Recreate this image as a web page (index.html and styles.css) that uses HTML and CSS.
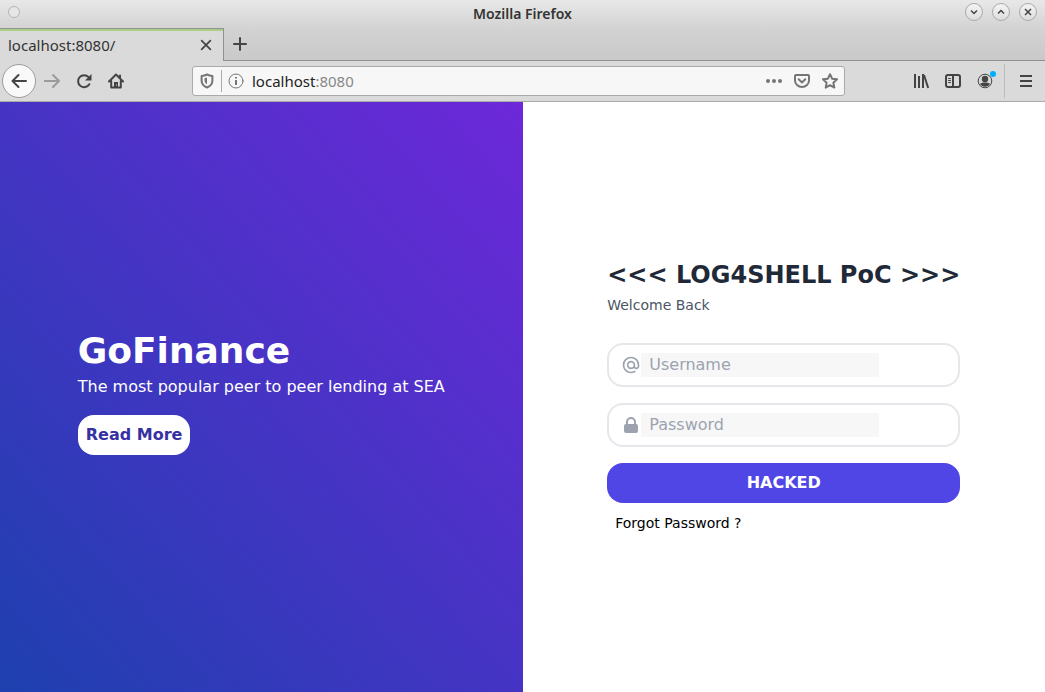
FILE: index.html
```html
<!DOCTYPE html>
<html lang="en">
<head>
<meta charset="utf-8">
<title>Mozilla Firefox</title>
<link rel="stylesheet" href="styles.css">
</head>
<body>
<div class="window">
  <header class="titlebar">
    <button class="dot" aria-label="Window menu"></button>
    <span class="window-title">Mozilla Firefox</span>
    <div class="window-controls">
      <button class="round" aria-label="Minimize"><svg viewBox="0 0 16 16"><path d="M5 6.500l3 3 3-3"/></svg></button>
      <button class="round" aria-label="Maximize"><svg viewBox="0 0 16 16"><path d="M5 9.500l3-3 3 3"/></svg></button>
      <button class="round" aria-label="Close"><svg viewBox="0 0 16 16"><path d="M5 5l6 6M11 5l-6 6"/></svg></button>
    </div>
  </header>
  <div class="tabstrip">
    <div class="tab">
      <span class="tab-label">localhost:8080/</span>
      <button class="icon-btn" aria-label="Close tab"><svg class="icon line" viewBox="0 0 16 16"><path d="M3 3l10 10M13 3L3 13"/></svg></button>
    </div>
    <div class="tab-rest">
      <button class="icon-btn" aria-label="New tab"><svg class="icon line" viewBox="0 0 16 16"><path d="M8 2v12M2 8h12"/></svg></button>
    </div>
  </div>
  <nav class="toolbar">
    <button class="back" aria-label="Back"><svg class="icon line" viewBox="0 0 16 16"><path d="M15 8H1.500M7.500 2l-6 6 6 6"/></svg></button>
    <div class="nav-buttons">
      <button class="icon-btn" aria-label="Forward" disabled><svg class="icon line faded" viewBox="0 0 16 16"><path d="M0.500 8H15M9 2l6 6-6 6"/></svg></button>
      <button class="icon-btn" aria-label="Reload"><svg class="icon line" viewBox="0 0 16 16"><path d="M13.300 11.200A6 6 0 1 1 12.600 4.200"/><path class="solid" d="M15.500 1v6.500H9z"/></svg></button>
      <button class="icon-btn" aria-label="Home"><svg class="icon line" viewBox="0 0 16 16"><path d="M1 8.500L8 1.500l7 7M3.200 8v6.500h9.600V8M12 2.500v3"/><path class="solid" d="M6 9h4v6H6z"/><path class="hole" d="M8 11.500h1v1H8z"/></svg></button>
    </div>
    <div class="urlbar">
      <svg class="icon line muted" viewBox="0 0 16 16"><path d="M8 1.500C6 2.500 4.500 2.800 2.600 3v4.500c0 3.500 2.200 5.800 5.400 7 3.200-1.200 5.400-3.500 5.400-7V3C11.500 2.800 10 2.500 8 1.500z"/><path class="solid" d="M8 4.500v7C6.300 10.300 5.500 9 5.500 7V5.200z"/></svg>
      <span class="url-sep"></span>
      <svg class="icon line info" viewBox="0 0 16 16"><circle cx="8" cy="8" r="7"/><path class="bold" d="M8 7v5M8 4v1.600"/></svg>
      <div class="url" role="textbox" aria-label="Address">localhost<span class="port">:8080</span></div>
      <div class="page-actions">
        <button class="icon-btn" aria-label="Page actions"><svg class="icon muted-fill" viewBox="0 0 16 16"><circle cx="2" cy="8" r="2"/><circle cx="8" cy="8" r="2"/><circle cx="14" cy="8" r="2"/></svg></button>
        <button class="icon-btn" aria-label="Save to Pocket"><svg class="icon line muted" viewBox="0 0 16 16"><path d="M2 2h12a1 1 0 0 1 1 1v4.500a7 6.500 0 0 1-14 0V3a1 1 0 0 1 1-1zM4.700 6.300L8 9.500l3.300-3.200"/></svg></button>
        <button class="icon-btn" aria-label="Bookmark"><svg class="icon line muted" viewBox="0 0 16 16"><path d="M8 1.200l2.100 4.500 4.900.6-3.600 3.400.9 4.900L8 12.200l-4.300 2.400.9-4.900L1 6.300l4.900-.6z"/></svg></button>
      </div>
    </div>
    <div class="tools">
      <button class="icon-btn" aria-label="Library"><svg class="icon line butt" viewBox="0 0 16 16"><path d="M2 1v14M6 3v12M10 1v14M11 2l4.200 13"/></svg></button>
      <button class="icon-btn" aria-label="Sidebars"><svg class="icon line" viewBox="0 0 16 16"><rect x="1" y="2" width="14" height="12" rx="2"/><path d="M8 2v12"/><path class="thin" d="M3.500 5.500h2M3.500 7.500h2M3.500 9.500h2"/></svg></button>
      <button class="icon-btn account" aria-label="Account"><svg class="icon" viewBox="0 0 16 16"><circle cx="8" cy="8" r="6.800" fill="none" stroke="#444"/><circle cx="8" cy="6" r="3.200"/><path d="M3 11c1-2 9-2 10 0a6 6 0 0 1-10 0z"/></svg><span class="badge"></span></button>
    </div>
    <button class="menu" aria-label="Open menu"><svg class="icon line butt" viewBox="0 0 16 16"><path d="M2 3h12M2 8h12M2 13h12"/></svg></button>
  </nav>
  <main class="page">
    <section class="hero">
      <div class="hero-content">
        <h1 class="brand">GoFinance</h1>
        <p class="tagline">The most popular peer to peer lending at SEA</p>
        <button class="read-more">Read More</button>
      </div>
    </section>
    <section class="login">
      <form class="login-form">
        <h2 class="login-title">&lt;&lt;&lt; LOG4SHELL PoC &gt;&gt;&gt;</h2>
        <p class="welcome">Welcome Back</p>
        <div class="field">
          <svg class="field-icon" viewBox="0 0 24 24"><path class="at" d="M16 12a4 4 0 1 0-8 0 4 4 0 0 0 8 0zm0 0v1.500a2.500 2.500 0 0 0 5 0V12a9 9 0 1 0-9 9m4.500-1.206a8.959 8.959 0 0 1-4.500 1.207"/></svg>
          <input class="field-input" type="text" placeholder="Username" aria-label="Username">
        </div>
        <div class="field">
          <svg class="field-icon" viewBox="0 0 20 20"><path fill-rule="evenodd" d="M5 9V7a5 5 0 0 1 10 0v2a2 2 0 0 1 2 2v5a2 2 0 0 1-2 2H5a2 2 0 0 1-2-2v-5a2 2 0 0 1 2-2zm8-2v2H7V7a3 3 0 0 1 6 0z"/></svg>
          <input class="field-input" type="password" placeholder="Password" aria-label="Password">
        </div>
        <button class="submit" type="button">HACKED</button>
        <a class="forgot" href="#">Forgot Password ?</a>
      </form>
    </section>
  </main>
</div>
</body>
</html>
```

FILE: styles.css
```css
* { box-sizing: border-box; margin: 0; }
body { font-family: "Noto Sans", sans-serif; font-size: 14px; color: #333; }
button { border: 0; padding: 0; background: none; font: inherit; color: inherit; }
svg { display: block; }

.window { display: flex; flex-direction: column; min-height: 100vh; }

.titlebar {
  display: grid;
  grid-template-columns: 1fr auto 1fr;
  align-items: center;
  height: 28px;
  padding: 0 8px;
  background: linear-gradient(#e8e8e8, #d3d3d3);
}
.dot {
  width: 12px;
  height: 12px;
  margin-bottom: 4px;
  border: 1px solid #b4b4b4;
  border-radius: 50%;
  background: #e6e6e6;
}
.window-title { font-weight: 600; line-height: 28px; color: #333; }
.window-controls { display: flex; justify-content: flex-end; gap: 9px; padding-bottom: 4px; }
.round {
  width: 18px;
  height: 18px;
  border: 1px solid #aaa;
  border-radius: 50%;
  background: linear-gradient(#f4f4f4, #dcdcdc);
}
.round svg { width: 16px; height: 16px; fill: none; stroke: #444; stroke-width: 1.5; }

.icon { width: 16px; height: 16px; fill: #444; }
.line { fill: none; stroke: #444; stroke-width: 2; stroke-linecap: round; stroke-linejoin: round; }
.line .solid { fill: #444; stroke: none; }
.line .hole { fill: #dadada; stroke: none; }
.line .thin { stroke-width: 1; }
.butt { stroke-linecap: butt; }
.faded { stroke: #9c9c9c; }
.muted { stroke: #757575; }
.muted .solid { fill: #757575; }
.muted-fill { fill: #757575; }
.info { stroke: #757575; stroke-width: 1; }
.info .bold { stroke-width: 2; stroke-linecap: butt; }

.tabstrip { display: flex; height: 33px; }
.tab {
  display: flex;
  align-items: center;
  justify-content: space-between;
  width: 224px;
  padding: 0 10px 0 8px;
  border-top: 1px solid #929292;
  border-right: 1px solid #929292;
  background: #dadada;
  box-shadow: inset 0 2px #abcf86;
}
.tab-label { font-size: 15px; line-height: 20px; }
.tab .icon { width: 14px; height: 14px; }
.tab-rest {
  display: flex;
  flex: 1;
  align-items: center;
  padding-left: 8px;
  border-bottom: 1px solid #929292;
  background: linear-gradient(#d3d3d3, #c9c9c9);
}

.toolbar {
  display: flex;
  align-items: center;
  height: 41px;
  padding-left: 2px;
  border-bottom: 1px solid #a9a9a9;
  background: #dadada;
}
.back {
  display: grid;
  place-items: center;
  width: 34px;
  height: 34px;
  border: 1px solid #9c9c9c;
  border-radius: 50%;
  background: #f9f9f9;
}
.nav-buttons { display: flex; gap: 16px; padding-left: 8px; }
.urlbar {
  display: flex;
  flex: 1;
  align-items: center;
  height: 30px;
  margin: 0 68px;
  padding: 0 6px;
  border: 1px solid #aaa;
  border-radius: 3px;
  background: #f7f7f7;
}
.url-sep { width: 1px; height: 22px; margin: 0 6px; background: #aaa; }
.url { flex: 1; padding-left: 8px; font-size: 15px; line-height: 20px; color: #222; }
.port { color: #888; }
.page-actions { display: flex; gap: 12px; }
.tools { display: flex; gap: 16px; }
.account { position: relative; }
.badge {
  position: absolute;
  top: -2px;
  right: -3px;
  width: 6px;
  height: 6px;
  border-radius: 50%;
  background: #00aeff;
}
.menu {
  display: grid;
  place-items: center;
  width: 41px;
  height: 34px;
  margin-left: 11px;
  padding-left: 2px;
  border-left: 1px solid #bcbcbc;
}

.page {
  display: grid;
  flex: 1;
  grid-template-columns: 1fr 1fr;
  font-family: "DejaVu Sans", sans-serif;
  font-size: 16px;
  line-height: 24px;
}
.hero {
  display: flex;
  align-items: center;
  justify-content: center;
  background: linear-gradient(to top right, #1e40af, #6d28d9);
}
.hero-content { display: flex; flex-direction: column; align-items: flex-start; }
.brand { font-size: 36px; line-height: 40px; color: #fff; }
.tagline { margin-top: 4px; color: #fff; }
.read-more {
  margin: 16px 0 8px;
  padding: 8px;
  border-radius: 16px;
  background: #fff;
  font-weight: 700;
  color: #3730a3;
}
.login { display: flex; align-items: center; justify-content: center; background: #fff; }
.login-form { display: flex; flex-direction: column; }
.login-title { margin-bottom: 4px; font-size: 24px; line-height: 32px; color: #1f2937; }
.welcome { margin-bottom: 28px; font-size: 14px; line-height: 20px; color: #4b5563; }
.field {
  display: flex;
  align-items: center;
  margin-bottom: 16px;
  padding: 8px 12px;
  border: 2px solid #e5e7eb;
  border-radius: 16px;
}
.field-icon { width: 20px; height: 20px; fill: #9ca3af; }
.at { fill: none; stroke: #9ca3af; stroke-width: 2; stroke-linecap: round; stroke-linejoin: round; }
.field-input {
  width: 238px;
  height: 24px;
  padding: 0 0 0 8px;
  border: 0;
  background: #f7f7f7;
  font: inherit;
}
.field-input::placeholder { color: #9ca3af; opacity: 1; }
.submit {
  margin-bottom: 8px;
  padding: 8px;
  border-radius: 16px;
  background: #4f46e5;
  font-weight: 600;
  color: #fff;
}
.forgot { align-self: flex-start; margin-left: 8px; font-size: 14px; color: #000; text-decoration: none; }
```
